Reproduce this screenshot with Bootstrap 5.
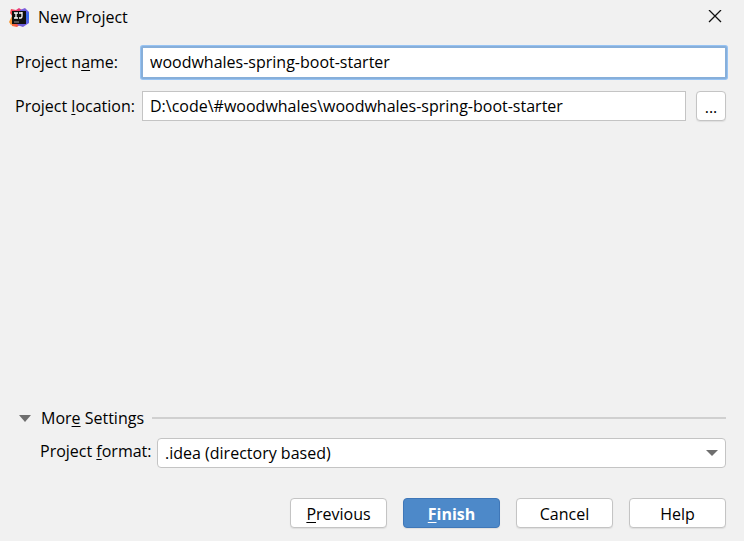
<!DOCTYPE html>
<html lang="en">
<head>
<meta charset="utf-8">
<meta name="viewport" content="width=device-width, initial-scale=1">
<title>New Project</title>
<link href="https://cdn.jsdelivr.net/npm/bootstrap@5.3.0/dist/css/bootstrap.min.css" rel="stylesheet">
<style>
  body { background: #f1f1f1; color: #000; font-family: "Open Sans", "Noto Sans", sans-serif; font-size: 16px; line-height: 24px; }
  .dialog { padding: 0 18px 13px 15px; }
  .titlebar { height: 34px; margin-left: -6px; }
  .title-text { font-size: 16px; line-height: 24px; }
  .btn-x { width: 22px; height: 24px; color: #000; line-height: 0; }
  .fields { padding-top: 13px; }
  .fields-gap { row-gap: 13px; }
  .field-label { width: 127px; padding-bottom: 1px; }
  .format-label { width: 117px; padding-bottom: 4px; }
  u { text-underline-offset: 2px; text-decoration-thickness: 1px; text-decoration-skip-ink: none; }
  .box { height: 30px; min-height: 30px; border: 1px solid #c4c4c4; background-color: #fff; color: #000; font-size: 16px; line-height: 24px; padding: 0 7px 1px; box-shadow: none; }
  .box:focus { color: #000; }
  .box-active, .box-active:focus { border-color: #87afda; box-shadow: 0 0 0 1px #87afda, 0 0 0 2px #97c3f3; border-radius: 1px; height: 31px; }
  .dlg-btn { height: 30px; border: 1px solid #c4c4c4; border-radius: 4px; background: #fff; color: #000; font-size: 16px; line-height: 24px; padding: 1px 0 0; box-shadow: 0 1px 1px #dedede; }
  .dlg-btn-wide { width: 97px; }
  .dlg-btn-main { background: #4d89c9; border-color: #3f77b8; color: #fff; font-weight: 700; }
  .btn-dots { width: 30px; margin-left: 10px; }
  .btns { gap: 16px; padding-top: 30px; }
  .format-row { padding: 8px 0 0 25px; }
  .format-box { border-radius: 4px; padding-right: 28px; background-image: url("data:image/svg+xml,%3Csvg xmlns='http://www.w3.org/2000/svg' viewBox='0 0 12 6'%3E%3Cpath d='M0 0h12L6 6z' fill='%236e6e6e'/%3E%3C/svg%3E"); background-size: 12px 6px; background-position: right 7px center; }
  .rule { border-top: 2px solid #d0d0d0; margin-left: 8px; }
  .fold { gap: 10px; font-size: 16px; color: #000; }
</style>
<script src="https://cdn.jsdelivr.net/npm/bootstrap@5.3.0/dist/js/bootstrap.bundle.min.js"></script>
</head>
<body>
<form class="dialog d-flex flex-column min-vh-100">
  <header class="titlebar d-flex align-items-center">
    <svg class="me-2" width="21" height="21" viewBox="0 0 21 21" aria-hidden="true">
      <defs>
        <linearGradient id="warm" x1="0" y1="1" x2="1" y2="0"><stop offset="0" stop-color="#f9852e"/><stop offset=".45" stop-color="#f5454e"/><stop offset="1" stop-color="#e8348c"/></linearGradient>
        <linearGradient id="cool" x1="0" y1="0" x2="0" y2="1"><stop offset="0" stop-color="#8a5bd8"/><stop offset=".4" stop-color="#2f6df0"/><stop offset="1" stop-color="#7c5cd6"/></linearGradient>
      </defs>
      <path d="M2 2 7 3 10 1l3 2v13l-5 4-5-1-1-4 1-6-2-3z" fill="url(#warm)"/>
      <path d="M11 3 16 1l4 4v11l-6 4-6-2 3-3z" fill="url(#cool)"/>
      <path d="M0 15 3 9v8l-1 1z" fill="#f79532"/>
      <rect x="3" y="4" width="14" height="13" fill="#101010"/>
      <path d="M5 6h4M7 6v5M5 11h4M10 6h3M13 5v4q0 2-1 2h-2" fill="none" stroke="#fff" stroke-width="1.3"/>
      <path d="M5 15h5" stroke="#999"/>
    </svg>
    <h1 class="title-text fw-normal mb-0">New Project</h1>
    <button type="button" class="btn-x btn p-0 ms-auto border-0" aria-label="Close">
      <svg width="14" height="14" viewBox="0 0 14 14"><path d="m1 0 12 12M13 0 1 12" stroke="#111" stroke-width="1.300"/></svg>
    </button>
  </header>

  <main class="fields fields-gap d-flex flex-column">
    <div class="d-flex align-items-center">
      <label class="field-label flex-shrink-0" for="pname">Project n<u>a</u>me:</label>
      <input id="pname" type="text" class="form-control box box-active" value="woodwhales-spring-boot-starter">
    </div>
    <div class="d-flex align-items-center">
      <label class="field-label flex-shrink-0" for="ploc">Project <u>l</u>ocation:</label>
      <input id="ploc" type="text" class="form-control rounded-0 box" value="D:\code\#woodwhales\woodwhales-spring-boot-starter">
      <button type="button" class="btn dlg-btn btn-dots flex-shrink-0">...</button>
    </div>
  </main>

  <section class="mt-auto">
    <div class="d-flex align-items-center">
      <button type="button" class="fold btn p-0 ps-1 border-0 d-flex align-items-center" aria-expanded="true">
        <svg width="12" height="7" viewBox="0 0 12 7" aria-hidden="true"><path d="M0 0h12L6 7z" fill="#6e6e6e"/></svg>
        <span>Mor<u>e</u> Settings</span>
      </button>
      <div class="rule flex-grow-1"></div>
    </div>
    <div class="format-row d-flex align-items-center">
      <label class="format-label flex-shrink-0" for="pformat">Project <u>f</u>ormat:</label>
      <select id="pformat" class="form-select box format-box"><option>.idea (directory based)</option></select>
    </div>
  </section>

  <footer class="btns d-flex justify-content-end">
    <button type="button" class="btn dlg-btn dlg-btn-wide"><u>P</u>revious</button>
    <button type="submit" class="btn dlg-btn dlg-btn-wide dlg-btn-main"><u>F</u>inish</button>
    <button type="button" class="btn dlg-btn dlg-btn-wide">Cancel</button>
    <button type="button" class="btn dlg-btn dlg-btn-wide">Help</button>
  </footer>
</form>
</body>
</html>
